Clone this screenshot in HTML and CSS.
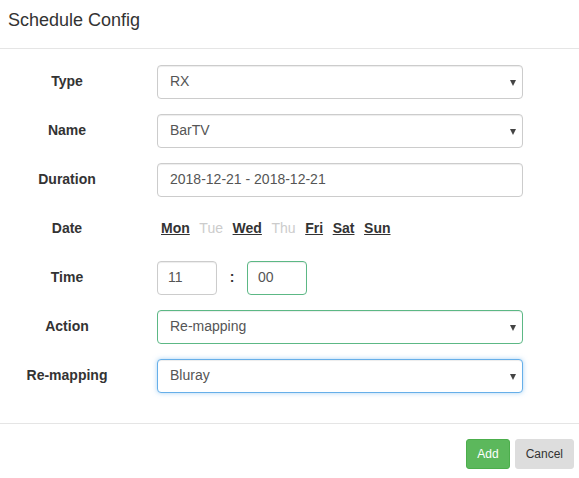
FILE: index.html
```html
<!DOCTYPE html>
<html lang="en">
<head>
<meta charset="utf-8">
<title>Schedule Config</title>
<link rel="stylesheet" href="styles.css">
</head>
<body>
<div class="modal">
  <div class="modal-header">
    <h4 class="modal-title">Schedule Config</h4>
  </div>
  <div class="modal-body">
    <div class="form-row">
      <label class="form-label">Type</label>
      <div class="form-control select"><span>RX</span><span class="caret"></span></div>
    </div>
    <div class="form-row">
      <label class="form-label">Name</label>
      <div class="form-control select"><span>BarTV</span><span class="caret"></span></div>
    </div>
    <div class="form-row">
      <label class="form-label">Duration</label>
      <div class="form-control">2018-12-21 - 2018-12-21</div>
    </div>
    <div class="form-row">
      <label class="form-label">Date</label>
      <div class="days">
        <a class="day on">Mon</a>
        <a class="day">Tue</a>
        <a class="day on">Wed</a>
        <a class="day">Thu</a>
        <a class="day on">Fri</a>
        <a class="day on">Sat</a>
        <a class="day on">Sun</a>
      </div>
    </div>
    <div class="form-row">
      <label class="form-label">Time</label>
      <div class="time">
        <div class="form-control time-input">11</div>
        <span class="colon">:</span>
        <div class="form-control time-input success">00</div>
      </div>
    </div>
    <div class="form-row">
      <label class="form-label">Action</label>
      <div class="form-control select success"><span>Re-mapping</span><span class="caret"></span></div>
    </div>
    <div class="form-row">
      <label class="form-label">Re-mapping</label>
      <div class="form-control select focus"><span>Bluray</span><span class="caret"></span></div>
    </div>
  </div>
  <div class="modal-footer">
    <button class="btn btn-success">Add</button>
    <button class="btn btn-default">Cancel</button>
  </div>
</div>
</body>
</html>
```

FILE: styles.css
```css
* { box-sizing: border-box; }
html, body {
  margin: 0;
  padding: 0;
  background: #fff;
}
body {
  font-family: "Liberation Sans", Arial, sans-serif;
  font-size: 14px;
  line-height: 1.42857;
  color: #333;
}
.modal {
  width: 579px;
}
.modal-header {
  padding: 7px 8px 15px;
  border-bottom: 1px solid #e5e5e5;
}
.modal-title {
  margin: 0;
  font-size: 18px;
  font-weight: normal;
  line-height: 26px;
  color: #333;
}
.modal-body {
  padding: 16px 56px 15px 0;
}
.form-row {
  display: grid;
  grid-template-columns: 134px 1fr;
  column-gap: 23px;
  align-items: center;
  height: 34px;
  margin-bottom: 15px;
}
.form-label {
  text-align: center;
  font-weight: bold;
  color: #333;
}
.form-control {
  height: 34px;
  padding: 0 12px;
  border: 1px solid #ccc;
  border-radius: 4px;
  background: #fff;
  color: #555;
  display: flex;
  align-items: center;
  box-shadow: inset 0 1px 1px rgba(0,0,0,.075);
}
.select {
  justify-content: space-between;
  padding-right: 6px;
}
.caret {
  width: 0;
  height: 0;
  border-left: 3.5px solid transparent;
  border-right: 3.5px solid transparent;
  border-top: 6px solid #444;
  margin-top: 1px;
}
.success {
  border-color: #5cb885;
}
.focus {
  border-color: #66afe9;
  box-shadow: inset 0 1px 1px rgba(0,0,0,.075), 0 0 5px rgba(102,175,233,.55);
}
.days {
  display: flex;
  gap: 9.6px;
  padding-left: 4px;
}
.day {
  color: #ccc;
  text-decoration: none;
}
.day.on {
  color: #333;
  font-weight: bold;
  text-decoration: underline;
}
.time {
  display: flex;
  align-items: center;
}
.time-input {
  width: 60px;
  padding: 0 10px;
}
.colon {
  width: 30px;
  text-align: center;
  font-weight: bold;
  color: #333;
}
.modal-footer {
  border-top: 1px solid #e5e5e5;
  padding: 15px 5px 15px;
  display: flex;
  justify-content: flex-end;
  gap: 5px;
}
.btn {
  font-family: "Liberation Sans", Arial, sans-serif;
  font-size: 12px;
  line-height: 18px;
  padding: 5px 10px;
  border: 1px solid transparent;
  border-radius: 3px;
  cursor: pointer;
}
.btn-success {
  background: #5cb85c;
  border-color: #4cae4c;
  color: #fff;
}
.btn-default {
  background: #ddd;
  border-color: #ddd;
  color: #333;
}
```
